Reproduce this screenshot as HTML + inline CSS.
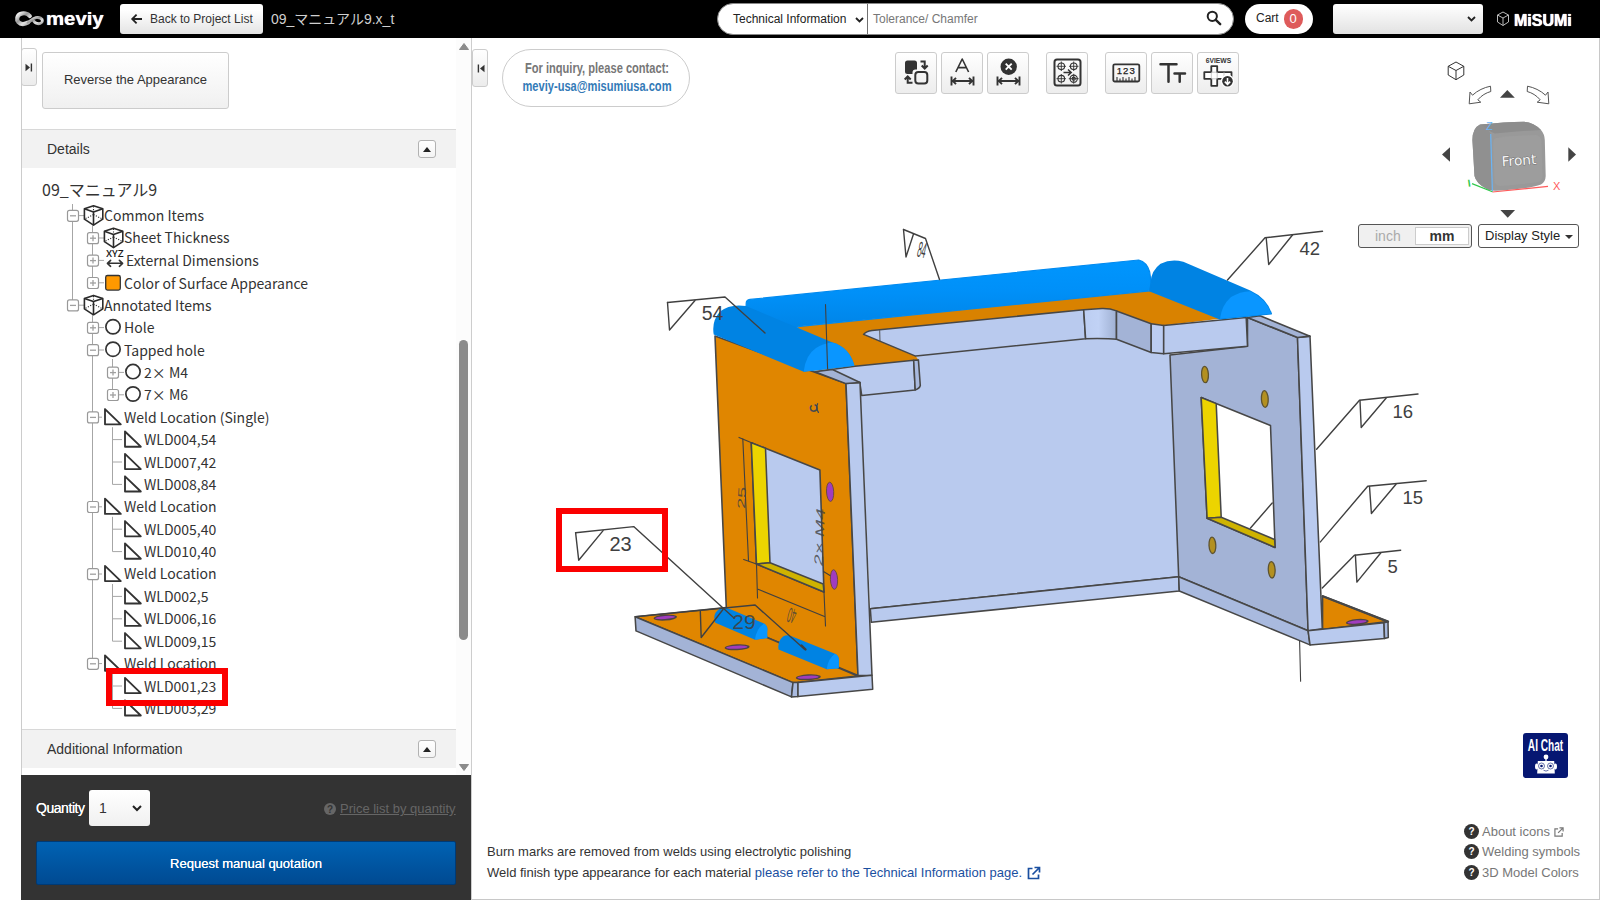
<!DOCTYPE html>
<html lang="en">
<head>
<meta charset="utf-8">
<title>meviy</title>
<style>
*{box-sizing:border-box;margin:0;padding:0}
html,body{width:1600px;height:900px;overflow:hidden;background:#fff}
body{font-family:"Liberation Sans","Noto Sans CJK JP",sans-serif;font-size:14px;color:#333;position:relative}
svg{position:absolute;overflow:visible}
/* ---------- top bar ---------- */
#topbar{position:absolute;left:0;top:0;width:1600px;height:38px;background:#000}
#logo{position:absolute;left:46px;top:6px;color:#fff;font-weight:bold;font-size:18px;line-height:26px;white-space:nowrap;transform-origin:0 0;transform:scaleX(1.130);text-shadow:0 0 0.700px #fff}
#back{position:absolute;left:120px;top:4px;width:143px;height:30px;border-radius:3px;background:linear-gradient(#fff 20%,#e4e4e4);color:#333;font-size:12px;line-height:30px;padding-left:30px;white-space:nowrap}
#fname{position:absolute;left:271px;top:9px;color:#d0d0d0;font-size:14px;line-height:20px;white-space:nowrap}
#search{position:absolute;left:717px;top:3px;width:517px;height:32px;border-radius:16px;background:#fff;border:1px solid #888}
#search .sel{position:absolute;left:15px;top:0;line-height:30px;font-size:12px;color:#222}
#search .dv{position:absolute;left:149px;top:0;width:1px;height:30px;background:#707070}
#search .ph{position:absolute;left:155px;top:0;line-height:30px;font-size:12px;color:#777}
#cart{position:absolute;left:1245px;top:4px;width:68px;height:30px;border-radius:15px;background:#fff;font-size:12px;line-height:28px;padding-left:11px;color:#222}
#cart b{position:absolute;left:38.5px;top:5px;width:19px;height:20px;border-radius:10px;background:#de5b5b;color:#fff;font-weight:normal;font-size:13px;line-height:20px;text-align:center}
#usel{position:absolute;left:1333px;top:4px;width:150px;height:30px;border-radius:3px;background:linear-gradient(#fff,#e2e2e2)}
#misumi{position:absolute;left:1514px;top:9.3px;color:#fff;font-weight:bold;font-size:16.5px;line-height:22px;white-space:nowrap;transform-origin:0 0;transform:scaleX(0.97);text-shadow:0 0 0.7px #fff,0 0 0.7px #fff}
/* ---------- left panel ---------- */
#lp{position:absolute;left:21px;top:38px;width:451px;height:862px;border-left:1px solid #ccc;border-right:1px solid #cdcdcd;background:#fff}
.tgl{position:absolute;width:16px;height:38px;border:1px solid #ccc;border-radius:3px;background:linear-gradient(#fff,#ececec)}
#rev{position:absolute;left:42px;top:52px;width:187px;height:57px;border:1px solid #ccc;border-radius:3px;background:linear-gradient(#fff,#f0f0f0);font-size:13px;line-height:54px;text-align:center;color:#333}
.hdr{position:absolute;left:22px;width:434px;height:39px;background:#f2f2f2;border-top:1px solid #d8d8d8;font-size:14px;line-height:38px;padding-left:25px;color:#333}
.hdr i{position:absolute;right:20px;top:10px;width:18px;height:18px;border:1px solid #b2b2b2;border-radius:3px;background:linear-gradient(#fff,#f4f4f4)}
.hdr i:after{content:"";position:absolute;left:4px;top:6px;border:4px solid transparent;border-top:0;border-bottom:5px solid #222}
#tree{position:absolute;left:0;top:0;width:457px;height:730px;font-family:"Noto Sans CJK JP","Liberation Sans",sans-serif;font-size:14px;color:#333}
#tree .t{position:absolute;white-space:nowrap;line-height:22px;height:22px}
#tree .root{font-size:16px;line-height:26px;height:26px}
#sb{position:absolute;left:456px;top:38px;width:15px;height:737px;background:#fcfcfc}
#sb .thumb{position:absolute;left:3px;top:302px;width:9px;height:300px;border-radius:5px;background:#8b8b8b}
#dark{position:absolute;left:21px;top:775px;width:450px;height:125px;background:#333}
#qty{position:absolute;left:36px;top:798.500px;color:#fff;font-size:14px;line-height:18px;letter-spacing:-0.45px;text-shadow:0 0 0.6px #fff}
#qsel{position:absolute;left:89px;top:790px;width:61px;height:36px;border-radius:3px;background:linear-gradient(#fff,#f0f0f0);font-size:14px;line-height:36px;padding-left:10px;color:#333}
#plist{position:absolute;left:340px;top:800px;color:#666;font-size:13px;line-height:18px;white-space:nowrap;text-decoration:underline}
#req{position:absolute;left:36px;top:841px;width:420px;height:44px;border-radius:2px;border:1px solid #003a75;background:linear-gradient(#0062b3,#004a92);color:#fff;font-size:13px;line-height:43px;text-align:center;text-shadow:0 0 0.5px #fff}
#redL{position:absolute;left:106px;top:668px;width:122px;height:38px;border:6px solid #fb0000}
/* ---------- viewer ---------- */
#viewer{position:absolute;left:472px;top:38px;width:1128px;height:862px;border-right:1px solid #c8c8c8;border-bottom:1px solid #c8c8c8;background:#fff}
#pill{position:absolute;left:502px;top:49px;width:188px;height:58px;border:1px solid #ccc;border-radius:29px;background:#fff;text-align:center;font-weight:bold;font-size:15px;white-space:nowrap}
#pill span{position:absolute;left:-56px;width:300px;text-align:center;transform:scaleX(0.74);line-height:18px}
.tb{position:absolute;top:52px;width:42px;height:42px;border:1px solid #ccc;border-radius:3px;background:linear-gradient(#fff,#ededed)}
#unit{position:absolute;left:1358px;top:224px;width:114px;height:24px;border:1px solid #555;border-radius:3px;background:#f0f0f0;font-size:14px;line-height:22px}
#unit .in{position:absolute;left:16px;top:0;color:#aaa}
#unit .mm{position:absolute;left:56px;top:2px;width:54px;height:18px;border:1px solid #ccc;background:#fff;text-align:center;font-weight:bold;color:#333;line-height:16px}
#dstyle{position:absolute;left:1478px;top:224px;width:101px;height:24px;border:1px solid #555;border-radius:3px;background:#fff;font-size:13px;line-height:22px;padding-left:6px;color:#222;white-space:nowrap}
#dstyle:after{content:"";position:absolute;right:5px;top:10px;border:4px solid transparent;border-bottom:0;border-top:4px solid #333}
#ai{position:absolute;left:1523px;top:733px;width:45px;height:45px;border-radius:3px;background:#061772}
#ai span{position:absolute;left:-18px;top:5px;width:81px;text-align:center;color:#fff;font-weight:bold;font-size:16px;line-height:16px;transform:scaleX(0.63);white-space:nowrap}
.hl{position:absolute;left:1464px;height:15px;font-size:13px;line-height:15px;color:#777;white-space:nowrap;padding-left:18px}
.hl:before{content:"?";position:absolute;left:0;top:0;width:15px;height:15px;border-radius:8px;background:#333;color:#fff;font-weight:bold;font-size:10px;line-height:15.500px;text-align:center}
.bt{position:absolute;left:487px;font-size:13px;line-height:18px;color:#333;white-space:nowrap}
.bt a{color:#1a4fa0;text-decoration:none}
#redV{position:absolute;left:556px;top:508px;width:112px;height:64px;border:6px solid #fb0000}

</style>
</head>
<body>
<div id="viewer"></div>
<div class="tgl" style="left:472px;top:49px"><svg width="9" height="9" viewBox="0 0 9 9" style="left:3px;top:14px"><path d="M8.5 0.8L4 4.5L8.5 8.2Z" fill="#333"/><path d="M2.4 0.5V8.5" stroke="#333" stroke-width="1.4"/></svg></div>
<div id="pill"><span style="top:9px;color:#777">For inquiry, please contact:</span><span style="top:27px;color:#337ab7">meviy-usa@misumiusa.com</span></div>

<!-- toolbar -->
<div class="tb" style="left:895px"><svg width="40" height="40" viewBox="0 0 40 40" style="left:-0.5px;top:-0.9px"><path d="M11.5 8.5H18.5A2.5 2.5 0 0 1 21 11V17.5H19.5A3 3 0 0 0 16.5 20.5V22H11.5A2.500 2.500 0 0 1 9 19.500V11A2.500 2.500 0 0 1 11.500 8.500Z" fill="#333"/><rect x="19.300" y="20" width="12" height="11.500" rx="3" fill="none" stroke="#333" stroke-width="2"/><path d="M24.500 9.500H28.700V16M25.700 13.500L28.700 16.500L31.700 13.500" fill="none" stroke="#333" stroke-width="2"/><path d="M16.500 30.700H11.700V25M8.700 27.500L11.700 24.500L14.700 27.500" fill="none" stroke="#333" stroke-width="2"/></svg></div>
<div class="tb" style="left:941px"><svg width="40" height="40" viewBox="0 0 40 40" style="left:-0.5px;top:-0.9px"><path d="M13.800 20L20.200 7L26.600 20M16.200 15.600H24.200" fill="none" stroke="#333" stroke-width="1.600" stroke-linejoin="round"/><path d="M9.500 24.500V33.500M31.500 24.500V33.500M10.500 29H30.500M14 25.800L10.800 29L14 32.200M27 25.800L30.200 29L27 32.200" fill="none" stroke="#333" stroke-width="1.900"/></svg></div>
<div class="tb" style="left:987px"><svg width="40" height="40" viewBox="0 0 40 40" style="left:-0.5px;top:-0.9px"><circle cx="20.700" cy="14.700" r="8.200" fill="#333"/><path d="M17.700 11.700L23.700 17.700M23.700 11.700L17.700 17.700" stroke="#fff" stroke-width="1.900"/><path d="M9.500 24.500V33.500M31.500 24.500V33.500M10.500 29H30.500M14 25.800L10.800 29L14 32.200M27 25.800L30.200 29L27 32.200" fill="none" stroke="#333" stroke-width="1.900"/></svg></div>
<div class="tb" style="left:1046px"><svg width="40" height="40" viewBox="0 0 40 40" style="left:-0.5px;top:-0.9px"><rect x="7.500" y="7.500" width="26" height="26" rx="2.500" fill="none" stroke="#333" stroke-width="2"/><g fill="none" stroke="#333" stroke-width="1.100"><circle cx="14.300" cy="14.300" r="3.300"/><circle cx="26.700" cy="14.300" r="3.300"/><circle cx="14.300" cy="26.700" r="3.300"/><circle cx="26.700" cy="26.700" r="3.600"/><circle cx="26.700" cy="26.700" r="1.600"/><path d="M14.300 9.500V19M9.500 14.300H19M26.700 9.500V19M22 14.300H31.500M14.300 22V31.500M9.500 26.700H19M26.700 21.800V31.700M21.800 26.700H31.700" stroke-width="0.900"/></g><path d="M16.500 20.500H24M21 17.500L24.200 20.500L21 23.500" fill="none" stroke="#333" stroke-width="1.500"/></svg></div>
<div class="tb" style="left:1105px"><svg width="40" height="40" viewBox="0 0 40 40" style="left:-0.5px;top:-0.9px"><rect x="7.300" y="12.300" width="26" height="17.200" rx="1.500" fill="none" stroke="#333" stroke-width="1.800"/><text x="20.300" y="22.300" text-anchor="middle" font-family="Liberation Sans,sans-serif" font-size="9.600" fill="#222" stroke="#222" stroke-width="0.250" letter-spacing="1">123</text><path d="M11 29V25M14 29V26.500M17 29V25M20 29V26.500M23 29V25M26 29V26.500M29 29V25" stroke="#333" stroke-width="1.100"/></svg></div>
<div class="tb" style="left:1151px"><svg width="40" height="40" viewBox="0 0 40 40" style="left:-0.5px;top:-0.9px"><path d="M8.500 12.300H24.500M16.500 12.300V29.800M22.500 21.500H33M27.700 21.500V29.800" fill="none" stroke="#333" stroke-width="2.500" stroke-linecap="round"/></svg></div>
<div class="tb" style="left:1197px"><svg width="40" height="40" viewBox="0 0 40 40" style="left:-0.5px;top:-0.9px"><text x="20.500" y="11.300" text-anchor="middle" font-family="Liberation Sans,sans-serif" font-weight="bold" font-size="7.200" fill="#333" textLength="25.500" lengthAdjust="spacingAndGlyphs">6VIEWS</text><path d="M13.300 14.200H19.200V20.200H33.500V26.800H19.200V33.800H13.300V26.800H6.300V20.200H13.300Z" fill="#fff" stroke="#333" stroke-width="1.800" stroke-linejoin="round"/><path d="M13.300 20.200H19.200V26.800H13.300ZM26 20.200V26.800" fill="none" stroke="#bbb" stroke-width="0.800"/><circle cx="29.500" cy="29.200" r="6.600" fill="#fff"/><circle cx="29.500" cy="29.200" r="5.300" fill="#333"/><path d="M29.500 26V32M26.800 29.600L29.500 32.300L32.200 29.600" fill="none" stroke="#fff" stroke-width="1.600"/></svg></div>

<!-- nav cube + arrows -->
<svg width="140" height="170" viewBox="1440 55 140 170" style="left:1440px;top:55px">
<g fill="none" stroke="#333" stroke-width="1"><path d="M1456 62L1463.800 66.300V75L1456 79.700L1448.200 75V66.300Z"/><path d="M1448.200 66.300L1456 70.500L1463.800 66.300M1456 70.500V79.700"/></g>
<path d="M1469.200 103.800L1470 92L1472.500 95.200C1477.500 90.500 1484 87.500 1490.500 86.200L1490.800 91.500C1486 92.800 1481.500 95.500 1477.800 99.800L1480.800 102.200Z" fill="#fff" stroke="#555" stroke-width="1"/>
<path d="M1548.800 103.800L1548 92L1545.500 95.200C1540.500 90.500 1534 87.500 1527.500 86.200L1527.200 91.500C1532 92.800 1536.500 95.500 1540.200 99.800L1537.200 102.200Z" fill="#fff" stroke="#555" stroke-width="1"/>
<path d="M1507.300 90L1500 97.800H1514.800Z" fill="#444"/>
<path d="M1507.700 217.700L1500.400 210H1515.100Z" fill="#444"/>
<path d="M1442 154.400L1450 147.300V161.700Z" fill="#444"/>
<path d="M1576 154.400L1568.300 147.300V161.700Z" fill="#444"/>
<defs><linearGradient id="cg1" x1="0" y1="0" x2="0" y2="1"><stop offset="0" stop-color="#8c8c8c"/><stop offset="1" stop-color="#a2a2a2"/></linearGradient></defs>
<path d="M1480 124.500Q1505 122 1524 121.700Q1534 122.500 1541 130Q1544.500 134 1544.800 140L1545.700 176Q1545.500 182 1541 184.500Q1530 189 1496 190.700Q1490 191 1486 188.500Q1476 183 1474.500 176L1472.400 140Q1472.500 128 1480 124.500Z" fill="#999"/>
<path d="M1480 124.500Q1505 122 1524 121.700Q1534 122.500 1541 130Q1520 131 1495 133.500Q1488 131 1480 124.500Z" fill="#8d8d8d"/>
<path d="M1480 124.500Q1488 128 1490.700 134L1492.400 190Q1488 190.500 1486 188.500Q1476 183 1474.500 176L1472.400 140Q1472.500 128 1480 124.500Z" fill="#909090"/>
<path d="M1496 138Q1515 135.500 1536 135Q1541 136 1541.500 141L1542.500 176Q1542 181 1538 182Q1520 185 1500 186Q1495 185.500 1494.500 181L1493 143Q1493.500 139 1496 138Z" fill="#9d9d9d"/>
<text x="1519" y="165.200" text-anchor="middle" font-family="DejaVu Sans,Liberation Sans,sans-serif" font-size="13.800" fill="#f6f6f6" stroke="#707070" stroke-width="0.900" paint-order="stroke" transform="rotate(-4 1519 161)">Front</text>
<path d="M1490.700 134L1492.400 191.600" stroke="#6ab4f5" stroke-width="1.200"/>
<path d="M1492.400 192L1548 186.400" stroke="#ff5a5a" stroke-width="1.200"/>
<path d="M1492.400 191.800L1472 183.600" stroke="#2fc84a" stroke-width="1.200"/>
<text x="1486" y="130" font-family="Liberation Sans,sans-serif" font-size="11" fill="#6ab4f5">Z</text>
<text x="1553" y="190" font-family="Liberation Sans,sans-serif" font-size="11" fill="#ff5a5a">X</text>
<text x="1467.500" y="186.500" font-family="Liberation Sans,sans-serif" font-size="10" font-weight="bold" fill="#2fc84a" transform="rotate(-8 1469 182)">I</text>
</svg>
<div id="unit"><span class="in">inch</span><span class="mm">mm</span></div>
<div id="dstyle">Display Style</div>

<div id="ai"><span>AI Chat</span><svg width="45" height="45" viewBox="0 0 45 45" style="left:0;top:0"><g fill="#fff"><circle cx="23" cy="24" r="2.400"/><rect x="22.400" y="25" width="1.200" height="3.500"/><path d="M14.800 28H31.200L31.800 40.500H14.200Z"/><ellipse cx="13.600" cy="33.500" rx="1.600" ry="3"/><ellipse cx="32.400" cy="33.500" rx="1.600" ry="3"/></g><g fill="none" stroke="#061772" stroke-width="0.600"><circle cx="18.500" cy="33" r="3"/><circle cx="27.500" cy="33" r="3"/><path d="M20.500 37.200Q23 39 25.500 37.200"/></g><circle cx="18.500" cy="33" r="1.300" fill="#061772"/><circle cx="27.500" cy="33" r="1.300" fill="#061772"/></svg></div>

<div class="hl" style="top:824px">About icons<svg width="10" height="10" viewBox="0 0 11 11" style="left:89.500px;top:3px"><path d="M4.500 2H1V10H9V6.500M6 1H10V5M10 1L4.500 6.500" fill="none" stroke="#777" stroke-width="1.300"/></svg></div>
<div class="hl" style="top:844px">Welding symbols</div>
<div class="hl" style="top:865px">3D Model Colors</div>
<div class="bt" style="top:843px">Burn marks are removed from welds using electrolytic polishing</div>
<div class="bt" style="top:864px">Weld finish type appearance for each material <a>please refer to the Technical Information page.</a><svg width="14" height="14" viewBox="0 0 14 14" style="margin-left:5px;top:2px;position:relative;display:inline-block;vertical-align:top"><path d="M5.500 2.500H1.500V12.500H11.500V8.500M7.500 1.500H12.500V6.500M12.500 1.500L5.500 8.500" fill="none" stroke="#1a4fa0" stroke-width="1.700"/></svg></div>

<svg width="1600" height="900" viewBox="0 0 1600 900" style="left:0;top:0">
<path d="M1322.5 596.0L1388.0 621.6L1322.5 629.5Z" fill="#e08600" stroke="#474747" stroke-width="1.7" stroke-linejoin="round"/>
<ellipse cx="1357.3" cy="622.0" rx="11.5" ry="3.0" fill="#4d4345" stroke="none" stroke-width="0" transform="rotate(-5 1357.3 622.0)"/>
<ellipse cx="1357.0" cy="621.9" rx="9.7" ry="1.55" fill="#a03cbe" stroke="none" stroke-width="0" transform="rotate(-5 1357.0 621.9)"/>
<path d="M860.0 330.0L1140.0 300.0L1172.0 355.0L1178.7 576.8L870.3 608.7L859.8 382.6Z" fill="#b9caee" stroke="none" stroke-width="1.55" stroke-linejoin="round"/>
<path d="M870.3 608.7L1178.7 576.8" fill="none" stroke="#474747" stroke-width="1.4" stroke-linecap="round" stroke-linejoin="round"/>
<path d="M870.3 608.7L1178.7 576.8L1179.3 591.0L871.3 622.3Z" fill="#b9caee" stroke="#474747" stroke-width="1.55" stroke-linejoin="round"/>
<path d="M1170.0 355.0L1247.5 346.2L1247.5 317.5L1297.5 337.5L1308.1 630.7L1178.7 576.8ZM1201.2 397.5L1270.5 425.5L1275.1 547.5L1207.1 518.2Z" fill="#a3b3d6" fill-rule="evenodd" stroke="#474747" stroke-width="1.55" stroke-linejoin="round"/>
<path d="M1201.2 397.5L1216.2 403.6L1221.2 517.3L1207.1 518.2Z" fill="#ecd400" stroke="#474747" stroke-width="1.55" stroke-linejoin="round"/>
<path d="M1207.1 518.2L1221.2 517.3L1274.6 539.5L1275.1 547.5Z" fill="#cfb300" stroke="#474747" stroke-width="1.55" stroke-linejoin="round"/>
<ellipse cx="1205" cy="374.5" rx="3.4" ry="8.2" fill="#b39020" stroke="#5e5330" stroke-width="1.3" transform="rotate(-3 1205 374.5)"/>
<ellipse cx="1264.8" cy="399" rx="3.4" ry="8.4" fill="#b39020" stroke="#5e5330" stroke-width="1.3" transform="rotate(-3 1264.8 399)"/>
<ellipse cx="1212.4" cy="545.3" rx="3.4" ry="8.2" fill="#b39020" stroke="#5e5330" stroke-width="1.3" transform="rotate(-3 1212.4 545.3)"/>
<ellipse cx="1271.7" cy="569.8" rx="3.4" ry="8.2" fill="#b39020" stroke="#5e5330" stroke-width="1.3" transform="rotate(-3 1271.7 569.8)"/>
<path d="M1178.7 576.8L1308.1 630.7L1310.0 644.9L1179.3 591.0Z" fill="#a9badf" stroke="#474747" stroke-width="1.55" stroke-linejoin="round"/>
<path d="M1297.5 337.5L1310.0 336.2L1322.3 628.8L1308.1 630.7Z" fill="#b9caee" stroke="#474747" stroke-width="1.55" stroke-linejoin="round"/>
<path d="M1308.1 630.7L1384.0 622.8L1384.5 638.4L1310.0 644.9Z" fill="#b9caee" stroke="#474747" stroke-width="1.55" stroke-linejoin="round"/>
<path d="M1384.0 622.8L1388.0 621.8L1388.3 637.4L1384.5 638.4Z" fill="#a9badf" stroke="#474747" stroke-width="1.55" stroke-linejoin="round"/>
<path d="M1322.8 596.3L1388.0 621.6" fill="none" stroke="#474747" stroke-width="2.3" stroke-linecap="round" stroke-linejoin="round"/>
<path d="M1247.5 317.5L1260.0 315.7L1310.0 336.2L1297.5 337.5Z" fill="#a3b3d6" stroke="#474747" stroke-width="1.7" stroke-linejoin="round"/>
<path d="M797 327.5L800 326.2L1150 290.7L1220 318.7L1163.7 325.5L1151.2 323.7L1117.5 311.2Q1110 308.4 1102 308.6L1083.7 309.8L872 330.4Q866 331 863.6 334.4L915.6 356.1L918.4 359.9L855 366.2L804 371.5Z" fill="#d98200" stroke="none" stroke-width="1.55" stroke-linejoin="round" stroke-linecap="round"/>
<defs><linearGradient id="rc1" x1="0" y1="0" x2="1" y2="0"><stop offset="0" stop-color="#bccdf1"/><stop offset="0.45" stop-color="#c1d2f5"/><stop offset="1" stop-color="#9fb0d2"/></linearGradient><linearGradient id="bd2" x1="0" y1="0" x2="0.1" y2="1"><stop offset="0" stop-color="#0097ff"/><stop offset="0.5" stop-color="#0090f8"/><stop offset="1" stop-color="#0084e6"/></linearGradient></defs>
<path d="M872 330.4L1083.7 309.8L1085.6 338.7L918.4 355.7L915.6 356.1L863.6 334.4Q866 331 872 330.4Z" fill="#b9caee" stroke="#474747" stroke-width="1.55" stroke-linejoin="round" stroke-linecap="round"/>
<path d="M879.7 330.6L880.0 341.2" fill="none" stroke="#474747" stroke-width="0.9" stroke-linecap="round" stroke-linejoin="round"/>
<path d="M1083.7 309.8L1102 308.6Q1110 308.4 1116.5 310.9L1116.5 339.3Q1108 338.3 1085.6 338.7Z" fill="url(#rc1)" stroke="#474747" stroke-width="1.55" stroke-linejoin="round" stroke-linecap="round"/>
<path d="M1116.5 310.9L1151.2 323.7L1151.2 352.5L1116.5 339.3Z" fill="#a3b3d6" stroke="#474747" stroke-width="1.55" stroke-linejoin="round"/>
<path d="M1151.2 323.7L1163.7 325.5L1163.7 353.7L1151.2 352.5Z" fill="#bccdf1" stroke="#474747" stroke-width="1.55" stroke-linejoin="round"/>
<path d="M1163.7 325.5L1246.2 317.5L1247.5 346.2L1163.7 353.7Z" fill="#b9caee" stroke="#474747" stroke-width="1.55" stroke-linejoin="round"/>
<path d="M815 371.7L855 366.2L913.7 360.3L915.2 389.9L861.7 395.4L859.8 382.6Z" fill="#b9caee" stroke="#474747" stroke-width="1.55" stroke-linejoin="round" stroke-linecap="round"/>
<path d="M913.7 360.3L918.4 359.9L920.3 385.5Q919.5 388.6 915.2 389.9Z" fill="#a9badf" stroke="#474747" stroke-width="1.55" stroke-linejoin="round" stroke-linecap="round"/>
<path d="M751.3 442.7L819.9 470.0L824.0 592.0L756.5 564.0Z" fill="#b9caee" stroke="none" stroke-width="1.55" stroke-linejoin="round"/>
<path d="M715.0 336.0L846.0 383.6L858.0 675.6L726.8 620.5L726.3 607.4ZM751.3 442.7L819.9 470.0L824.0 592.0L756.5 564.0Z" fill="#e08600" fill-rule="evenodd" stroke="#474747" stroke-width="1.6" stroke-linejoin="round"/>
<path d="M751.3 442.7L765.5 448.3L770.0 562.8L756.5 564.0Z" fill="#ecd400" stroke="#474747" stroke-width="1.55" stroke-linejoin="round"/>
<path d="M756.5 564.0L770.0 562.8L823.2 584.0L824.0 592.0Z" fill="#cfb300" stroke="#474747" stroke-width="1.55" stroke-linejoin="round"/>
<path d="M846.0 383.6L860.0 382.5L872.0 675.3L858.0 675.6Z" fill="#b9caee" stroke="#474747" stroke-width="1.55" stroke-linejoin="round"/>
<path d="M815.0 371.7L832.5 369.5L860.0 382.5L846.0 383.6Z" fill="#a3b3d6" stroke="#474747" stroke-width="1.55" stroke-linejoin="round"/>
<ellipse cx="830.1" cy="491.8" rx="3.6" ry="9.6" fill="#a03cbe" stroke="#6a4a3a" stroke-width="0.9" transform="rotate(-3 830.1 491.8)"/>
<ellipse cx="834" cy="579.5" rx="3.6" ry="9.8" fill="#a03cbe" stroke="#6a4a3a" stroke-width="0.9" transform="rotate(-3 834 579.5)"/>
<path d="M635.1 616.7L726.3 607.4L726.8 620.5L857.6 676.0L797.0 682.4L793.0 682.6Z" fill="#e08600" stroke="#474747" stroke-width="1.5" stroke-linejoin="round"/>
<path d="M635.1 616.7L793.0 682.6L791.5 696.9L636.0 630.9Z" fill="#a3b3d6" stroke="#474747" stroke-width="1.55" stroke-linejoin="round"/>
<path d="M793.0 682.6L798.0 682.4L798.0 696.6L791.5 696.9Z" fill="#a9badf" stroke="#474747" stroke-width="1.55" stroke-linejoin="round"/>
<path d="M798.0 682.4L872.0 675.3L872.7 689.3L798.0 696.6Z" fill="#b9caee" stroke="#474747" stroke-width="1.55" stroke-linejoin="round"/>
<ellipse cx="665.3" cy="617.6" rx="11.8" ry="3.0" fill="#4d4345" stroke="none" stroke-width="0" transform="rotate(-4 665.3 617.6)"/>
<ellipse cx="665.0" cy="617.5" rx="10.0" ry="1.55" fill="#a03cbe" stroke="none" stroke-width="0" transform="rotate(-4 665.0 617.5)"/>
<ellipse cx="737.1" cy="647.3" rx="12.5" ry="3.0" fill="#4d4345" stroke="none" stroke-width="0" transform="rotate(-3 737.1 647.3)"/>
<ellipse cx="736.8000000000001" cy="647.1999999999999" rx="10.7" ry="1.55" fill="#a03cbe" stroke="none" stroke-width="0" transform="rotate(-3 736.8000000000001 647.1999999999999)"/>
<ellipse cx="808.3" cy="677.3" rx="12.5" ry="3.0" fill="#4d4345" stroke="none" stroke-width="0" transform="rotate(-3 808.3 677.3)"/>
<ellipse cx="808.0" cy="677.1999999999999" rx="10.7" ry="1.55" fill="#a03cbe" stroke="none" stroke-width="0" transform="rotate(-3 808.0 677.1999999999999)"/>
<path d="M715.3 622.7Q712 613.5 719.5 609Q725 606.8 731 609.5L764 623.5Q768.5 626.5 767 631L767.3 638L755 639.8Z" fill="#0083e3" stroke="none" stroke-width="1.55" stroke-linejoin="round" stroke-linecap="round"/>
<path d="M755 639.8Q756 629 764 623.5Q768.5 626.5 767.2 633L767.3 638Z" fill="#0a96ff" stroke="none" stroke-width="1.55" stroke-linejoin="round" stroke-linecap="round"/>
<path d="M778.5 649.5Q777.5 641 783 636.5Q787 634.5 791 636L835 653.8Q839.5 656 838.8 661L838.7 668.3L826.7 669.2Z" fill="#0083e3" stroke="none" stroke-width="1.55" stroke-linejoin="round" stroke-linecap="round"/>
<path d="M826.7 669.2Q828 658.5 835 653.8Q839.5 656 838.8 661L838.7 668.3Z" fill="#0a96ff" stroke="none" stroke-width="1.55" stroke-linejoin="round" stroke-linecap="round"/>
<path d="M746.2 303.5Q746 300 750 299.4L1138.7 260Q1147 262 1149.7 272Q1151.5 282 1150 290.8L800 326.3L790 330L746 310Z" fill="url(#bd2)" stroke="#008af0" stroke-width="1.2" stroke-linejoin="round" stroke-linecap="round"/>
<path d="M713.7 334.5Q711.5 321 720 311.5Q730 303.5 746 306L832.5 342.5Q849 347 854.5 365.7L803.7 371.7Z" fill="#0083e3" stroke="none" stroke-width="1.55" stroke-linejoin="round" stroke-linecap="round"/>
<path d="M803.7 371.7Q805.5 355 816 348Q824 343 832.5 342.5Q849 347 854.5 365.7Z" fill="#0a96ff" stroke="none" stroke-width="1.55" stroke-linejoin="round" stroke-linecap="round"/>
<path d="M1151.2 283Q1152 271 1161 264.5Q1171 259.5 1183 262.5L1250 291.2Q1266 298.5 1271.2 313.7L1220 318.8L1150 290.8Z" fill="#0083e3" stroke="#0083e3" stroke-width="1.6" stroke-linejoin="round" stroke-linecap="round"/>
<path d="M1220 318.8Q1221.5 305.5 1231 297Q1240 291.5 1250 291.2Q1266 298.5 1271.2 313.7Z" fill="#0a96ff" stroke="none" stroke-width="1.55" stroke-linejoin="round" stroke-linecap="round"/>
<path d="M667.5 302.5L669.5 330.0L695.0 300.5" fill="none" stroke="#404040" stroke-width="1.4" stroke-linecap="round" stroke-linejoin="round"/>
<path d="M667.5 302.5L725.0 297.0L765.0 333.0" fill="none" stroke="#404040" stroke-width="1.4" stroke-linecap="round" stroke-linejoin="round"/>
<text x="701.7" y="320.3" font-family="Liberation Sans,sans-serif" font-size="19.5" fill="#404040">54</text>
<path d="M903.5 229.5L906.0 257.0L913.5 234.0" fill="none" stroke="#404040" stroke-width="1.4" stroke-linecap="round" stroke-linejoin="round"/>
<path d="M903.5 229.5L925.5 238.5L939.5 279.5" fill="none" stroke="#404040" stroke-width="1.4" stroke-linecap="round" stroke-linejoin="round"/>
<text font-family="Liberation Sans,sans-serif" font-size="22" fill="#404040" transform="translate(916.2 256.3) rotate(13) scale(0.35 1)">84</text>
<path d="M1266.2 238.0L1268.7 264.5L1292.5 235.0" fill="none" stroke="#404040" stroke-width="1.4" stroke-linecap="round" stroke-linejoin="round"/>
<path d="M1322.5 231.2L1265.0 237.8L1227.5 280.0" fill="none" stroke="#404040" stroke-width="1.4" stroke-linecap="round" stroke-linejoin="round"/>
<text x="1299.5" y="254.6" font-family="Liberation Sans,sans-serif" font-size="18.5" fill="#404040">42</text>
<path d="M1360.0 400.5L1361.2 427.5L1386.2 398.0" fill="none" stroke="#404040" stroke-width="1.4" stroke-linecap="round" stroke-linejoin="round"/>
<path d="M1418.0 394.0L1359.5 400.3L1316.6 449.3" fill="none" stroke="#404040" stroke-width="1.4" stroke-linecap="round" stroke-linejoin="round"/>
<text x="1392.5" y="418" font-family="Liberation Sans,sans-serif" font-size="18.5" fill="#404040">16</text>
<path d="M1272.2 503.0L1250.5 528.0" fill="none" stroke="#404040" stroke-width="1.4" stroke-linecap="round" stroke-linejoin="round"/>
<path d="M1369.5 486.5L1371.4 513.5L1396.0 484.2" fill="none" stroke="#404040" stroke-width="1.4" stroke-linecap="round" stroke-linejoin="round"/>
<path d="M1426.2 480.8L1367.7 486.3L1320.4 541.9" fill="none" stroke="#404040" stroke-width="1.4" stroke-linecap="round" stroke-linejoin="round"/>
<text x="1402.5" y="504.2" font-family="Liberation Sans,sans-serif" font-size="18.5" fill="#404040">15</text>
<path d="M1355.4 555.1L1356.9 582.1L1380.9 552.8" fill="none" stroke="#404040" stroke-width="1.4" stroke-linecap="round" stroke-linejoin="round"/>
<path d="M1400.7 550.2L1354.4 555.2L1322.3 588.1" fill="none" stroke="#404040" stroke-width="1.4" stroke-linecap="round" stroke-linejoin="round"/>
<text x="1387.5" y="572.8" font-family="Liberation Sans,sans-serif" font-size="18.5" fill="#404040">5</text>
<path d="M575.6 532.7L578.7 560.2L603.1 530.6" fill="none" stroke="#404040" stroke-width="1.4" stroke-linecap="round" stroke-linejoin="round"/>
<path d="M575.6 532.7L633.7 526.6L734.0 618.0" fill="none" stroke="#404040" stroke-width="1.4" stroke-linecap="round" stroke-linejoin="round"/>
<text x="609.5" y="550.7" font-family="Liberation Sans,sans-serif" font-size="20" fill="#404040">23</text>
<path d="M700.3 610.6L701.2 637.5L723.0 609.5" fill="none" stroke="#404040" stroke-width="1.4" stroke-linecap="round" stroke-linejoin="round"/>
<path d="M636.0 616.6L755.1 605.0L804.0 648.7" fill="none" stroke="#404040" stroke-width="1.4" stroke-linecap="round" stroke-linejoin="round"/>
<path d="M801.5 645.5L805.5 649.5" fill="none" stroke="#404040" stroke-width="2.4" stroke-linejoin="round" stroke-linecap="round"/>
<text x="732.3" y="628.9" font-family="Liberation Sans,sans-serif" font-size="21" fill="#404040" fill-opacity="0.9">29</text>
<path d="M825.5 304.6L827.6 369.0" fill="none" stroke="#404040" stroke-width="1.1" stroke-linecap="round" stroke-linejoin="round"/>
<path d="M1299.6 641.1L1300.6 681.3" fill="none" stroke="#404040" stroke-width="1.1" stroke-linecap="round" stroke-linejoin="round"/>
<path d="M742.8 438.9L748.5 560.8" fill="none" stroke="#404040" stroke-width="1.1" stroke-linecap="round" stroke-linejoin="round"/>
<path d="M739.0 437.4L752.2 443.0" fill="none" stroke="#404040" stroke-width="1.1" stroke-linecap="round" stroke-linejoin="round"/>
<path d="M743.7 559.4L756.5 564.0" fill="none" stroke="#404040" stroke-width="1.1" stroke-linecap="round" stroke-linejoin="round"/>
<path d="M756.5 564.0L757.5 598.0" fill="none" stroke="#404040" stroke-width="1.1" stroke-linecap="round" stroke-linejoin="round"/>
<path d="M758.0 589.2L824.5 616.5" fill="none" stroke="#404040" stroke-width="1.1" stroke-linecap="round" stroke-linejoin="round"/>
<path d="M824.0 592.0L825.5 626.0" fill="none" stroke="#404040" stroke-width="1.1" stroke-linecap="round" stroke-linejoin="round"/>
<path d="M823.5 571.5L830.0 575.5" fill="none" stroke="#404040" stroke-width="1.1" stroke-linecap="round" stroke-linejoin="round"/>
<text font-family="Liberation Sans,sans-serif" font-size="20" fill="#404040" fill-opacity="0.8" transform="translate(745 509) rotate(-87.5) scale(1 0.55)">25</text>
<text font-family="Liberation Sans,sans-serif" font-style="italic" font-size="20.5" fill="#404040" fill-opacity="0.8" transform="translate(822.8 566) rotate(-88) scale(1 0.6)">2× M4</text>
<text font-family="Liberation Sans,sans-serif" font-size="21" fill="#404040" fill-opacity="0.8" transform="translate(797.5 609.5) rotate(194) scale(0.36 1)">40</text>
<text font-family="Liberation Sans,sans-serif" font-size="11.5" fill="#3a4658" stroke="#3a4658" stroke-width="0.5" transform="translate(817.8 411.4) rotate(-100) scale(0.95 0.9)">C</text>
<path d="M817.6 403.8Q815.6 408 818.4 412.4" fill="none" stroke="#3a4658" stroke-width="1.3" stroke-linejoin="round" stroke-linecap="round"/>
</svg>

<div id="redV"></div>

<div id="lp"></div>
<div id="topbar">
  <svg width="60" height="38" viewBox="0 0 60 38" style="left:0;top:0"><defs><linearGradient id="lg1" x1="0" y1="0" x2="1" y2="1"><stop offset="0" stop-color="#ffffff"/><stop offset="0.4" stop-color="#9a9a9a"/><stop offset="0.7" stop-color="#e2e2e2"/><stop offset="1" stop-color="#a8a8a8"/></linearGradient></defs><g fill="none" stroke="url(#lg1)" stroke-linecap="round"><path d="M29.800 16C27.500 13.300 23.500 12.800 20.500 14C17 15.400 16.200 19.600 18.400 22.200C20.600 24.800 25 24.500 28 22.600" stroke-width="4.200"/><path d="M28 22.600C30.500 21 32.500 18.700 36 17.700C39.500 16.900 42.600 18.500 42.400 21C42.200 23.500 39 24.400 36.200 23.100C35.200 22.600 34.400 21.900 33.800 21.100" stroke-width="2.900"/></g></svg>
  <div id="logo">meviy</div>
  <div id="back">Back to Project List<svg width="12" height="12" viewBox="0 0 12 12" style="left:11px;top:9px"><path d="M11 6H1.6M5.6 1.6L1.2 6L5.6 10.4" fill="none" stroke="#222" stroke-width="1.8"/></svg></div>
  <div id="fname">09_マニュアル9.x_t</div>
  <div id="search"><span class="sel">Technical Information</span><svg width="9" height="6" viewBox="0 0 9 6" style="left:137px;top:12.500px"><path d="M1 1L4.5 4.5L8 1" fill="none" stroke="#222" stroke-width="1.8"/></svg><span class="dv"></span><span class="ph">Tolerance/ Chamfer</span><svg width="16" height="16" viewBox="0 0 16 16" style="left:488px;top:6px"><circle cx="6.3" cy="6.3" r="4.6" fill="none" stroke="#222" stroke-width="2"/><path d="M9.8 9.8L14.2 14.2" stroke="#222" stroke-width="2.4" stroke-linecap="round"/></svg></div>
  <div id="cart">Cart<b>0</b></div>
  <div id="usel"><svg width="9" height="6" viewBox="0 0 9 6" style="left:134px;top:12px"><path d="M1 1L4.5 4.5L8 1" fill="none" stroke="#222" stroke-width="1.8"/></svg></div>
  <svg width="14" height="18" viewBox="0 0 14 18" style="left:1496px;top:10px"><g fill="none" stroke="#bbb" stroke-width="1"><path d="M7 2L12.5 5V12L7 15.5L1.5 12V5Z"/><path d="M1.5 5L7 8L12.5 5M7 8V15.5"/></g></svg>
  <div id="misumi">MiSUMi</div>
</div>

<div class="tgl" style="left:21px;top:48px"><svg width="9" height="9" viewBox="0 0 9 9" style="left:3px;top:14px"><path d="M0.5 0.8L5 4.5L0.5 8.2Z" fill="#333"/><path d="M6.4 0.5V8.5" stroke="#333" stroke-width="1.4"/></svg></div>
<div id="rev">Reverse the Appearance</div>
<div class="hdr" style="top:129px">Details<i></i></div>
<div id="tree">
<svg width="457" height="730" viewBox="0 0 457 730" style="left:0;top:0">
<defs>
<symbol id="i-cube" overflow="visible"><g fill="none" stroke="#2b2b2b" stroke-width="1.6" stroke-linejoin="round"><path d="M9.5 0.8L18.8 3.8V14.2L9.5 20.2L0.4 14.2V3.8Z"/><path d="M0.4 3.8L9.5 7L18.8 3.8M9.5 7V20.2"/><path d="M9.5 1.5V9.6M9.5 9.6L1.5 13.6M9.5 9.6L17.6 13.6" stroke-width="1.1" stroke-dasharray="1.1 1.5"/></g></symbol>
</defs>
<g stroke="#a6a6a6" stroke-width="1" fill="none"><path d="M79.0 215.6L84.0 215.6"/><path d="M99.0 238.0L104.0 238.0"/><path d="M99.0 260.4L104.0 260.4"/><path d="M99.0 282.8L104.0 282.8"/><path d="M79.0 305.2L84.0 305.2"/><path d="M99.0 327.6L104.0 327.6"/><path d="M99.0 350.0L104.0 350.0"/><path d="M119.0 372.4L124.0 372.4"/><path d="M119.0 394.8L124.0 394.8"/><path d="M99.0 417.2L102.0 417.2"/><path d="M112.5 439.6L122.0 439.6"/><path d="M112.5 462.0L122.0 462.0"/><path d="M112.5 484.4L122.0 484.4"/><path d="M99.0 506.8L102.0 506.8"/><path d="M112.5 529.2L122.0 529.2"/><path d="M112.5 551.6L122.0 551.6"/><path d="M99.0 574.0L102.0 574.0"/><path d="M112.5 596.4L122.0 596.4"/><path d="M112.5 618.8L122.0 618.8"/><path d="M112.5 641.2L122.0 641.2"/><path d="M99.0 663.6L102.0 663.6"/><path d="M112.5 686.0L122.0 686.0"/><path d="M112.5 708.4L122.0 708.4"/><path d="M72.5 204.0L72.5 305.2"/><path d="M92.5 225.6L92.5 282.8"/><path d="M92.5 315.2L92.5 663.6"/><path d="M112.5 359.0L112.5 394.8"/><path d="M112.5 427.2L112.5 484.4"/><path d="M112.5 516.8L112.5 551.6"/><path d="M112.5 584.0L112.5 641.2"/><path d="M112.5 673.6L112.5 708.4"/></g>
<rect x="67.5" y="210.3" width="11" height="11" rx="2" fill="#fff" stroke="#999" stroke-width="1.2"/><path d="M70.0 215.8h6" stroke="#a0a0a0" stroke-width="1.3"/><rect x="87.5" y="232.7" width="11" height="11" rx="2" fill="#fff" stroke="#999" stroke-width="1.2"/><path d="M90.0 238.2h6" stroke="#a0a0a0" stroke-width="1.3"/><path d="M93.0 235.2v6" stroke="#a0a0a0" stroke-width="1.3"/><rect x="87.5" y="255.1" width="11" height="11" rx="2" fill="#fff" stroke="#999" stroke-width="1.2"/><path d="M90.0 260.6h6" stroke="#a0a0a0" stroke-width="1.3"/><path d="M93.0 257.6v6" stroke="#a0a0a0" stroke-width="1.3"/><rect x="87.5" y="277.5" width="11" height="11" rx="2" fill="#fff" stroke="#999" stroke-width="1.2"/><path d="M90.0 283.0h6" stroke="#a0a0a0" stroke-width="1.3"/><path d="M93.0 280.0v6" stroke="#a0a0a0" stroke-width="1.3"/><rect x="67.5" y="299.9" width="11" height="11" rx="2" fill="#fff" stroke="#999" stroke-width="1.2"/><path d="M70.0 305.4h6" stroke="#a0a0a0" stroke-width="1.3"/><rect x="87.5" y="322.3" width="11" height="11" rx="2" fill="#fff" stroke="#999" stroke-width="1.2"/><path d="M90.0 327.8h6" stroke="#a0a0a0" stroke-width="1.3"/><path d="M93.0 324.8v6" stroke="#a0a0a0" stroke-width="1.3"/><rect x="87.5" y="344.7" width="11" height="11" rx="2" fill="#fff" stroke="#999" stroke-width="1.2"/><path d="M90.0 350.2h6" stroke="#a0a0a0" stroke-width="1.3"/><rect x="107.5" y="367.1" width="11" height="11" rx="2" fill="#fff" stroke="#999" stroke-width="1.2"/><path d="M110.0 372.6h6" stroke="#a0a0a0" stroke-width="1.3"/><path d="M113.0 369.6v6" stroke="#a0a0a0" stroke-width="1.3"/><rect x="107.5" y="389.5" width="11" height="11" rx="2" fill="#fff" stroke="#999" stroke-width="1.2"/><path d="M110.0 395.0h6" stroke="#a0a0a0" stroke-width="1.3"/><path d="M113.0 392.0v6" stroke="#a0a0a0" stroke-width="1.3"/><rect x="87.5" y="411.9" width="11" height="11" rx="2" fill="#fff" stroke="#999" stroke-width="1.2"/><path d="M90.0 417.4h6" stroke="#a0a0a0" stroke-width="1.3"/><rect x="87.5" y="501.5" width="11" height="11" rx="2" fill="#fff" stroke="#999" stroke-width="1.2"/><path d="M90.0 507.0h6" stroke="#a0a0a0" stroke-width="1.3"/><rect x="87.5" y="568.7" width="11" height="11" rx="2" fill="#fff" stroke="#999" stroke-width="1.2"/><path d="M90.0 574.2h6" stroke="#a0a0a0" stroke-width="1.3"/><rect x="87.5" y="658.3" width="11" height="11" rx="2" fill="#fff" stroke="#999" stroke-width="1.2"/><path d="M90.0 663.8h6" stroke="#a0a0a0" stroke-width="1.3"/>
<use href="#i-cube" x="84" y="205.0"/><use href="#i-cube" x="104" y="227.4"/><g transform="translate(106 249.8)"><text x="8.8" y="7.2" text-anchor="middle" font-family="Noto Sans CJK JP,Liberation Sans,sans-serif" font-weight="500" font-size="9" fill="#1a1a1a" textLength="17.8" lengthAdjust="spacingAndGlyphs">XYZ</text><path d="M1.6 13.5H16.4M4.6 10.5L1.4 13.5L4.6 16.5M13.4 10.5L16.6 13.5L13.4 16.5" fill="none" stroke="#333" stroke-width="1.6" stroke-linecap="round" stroke-linejoin="round"/></g><rect x="105.7" y="275.5" width="14.6" height="14.6" rx="1.8" fill="#ff9900" stroke="#333" stroke-width="1.3"/><use href="#i-cube" x="84" y="294.6"/><circle cx="113" cy="326.8" r="7.15" fill="none" stroke="#333" stroke-width="1.7"/><circle cx="113" cy="349.2" r="7.15" fill="none" stroke="#333" stroke-width="1.7"/><circle cx="133" cy="371.6" r="7.15" fill="none" stroke="#333" stroke-width="1.7"/><circle cx="133" cy="394.0" r="7.15" fill="none" stroke="#333" stroke-width="1.7"/><path d="M105.0 409.1V424.3H120.8Z" fill="none" stroke="#333" stroke-width="1.85" stroke-linejoin="round"/><path d="M125.0 431.5V446.7H140.8Z" fill="none" stroke="#333" stroke-width="1.85" stroke-linejoin="round"/><path d="M125.0 453.9V469.1H140.8Z" fill="none" stroke="#333" stroke-width="1.85" stroke-linejoin="round"/><path d="M125.0 476.3V491.5H140.8Z" fill="none" stroke="#333" stroke-width="1.85" stroke-linejoin="round"/><path d="M105.0 498.7V513.9H120.8Z" fill="none" stroke="#333" stroke-width="1.85" stroke-linejoin="round"/><path d="M125.0 521.1V536.3H140.8Z" fill="none" stroke="#333" stroke-width="1.85" stroke-linejoin="round"/><path d="M125.0 543.5V558.7H140.8Z" fill="none" stroke="#333" stroke-width="1.85" stroke-linejoin="round"/><path d="M105.0 565.9V581.1H120.8Z" fill="none" stroke="#333" stroke-width="1.85" stroke-linejoin="round"/><path d="M125.0 588.3V603.5H140.8Z" fill="none" stroke="#333" stroke-width="1.85" stroke-linejoin="round"/><path d="M125.0 610.7V625.9H140.8Z" fill="none" stroke="#333" stroke-width="1.85" stroke-linejoin="round"/><path d="M125.0 633.1V648.3H140.8Z" fill="none" stroke="#333" stroke-width="1.85" stroke-linejoin="round"/><path d="M105.0 655.5V670.7H120.8Z" fill="none" stroke="#333" stroke-width="1.85" stroke-linejoin="round"/><path d="M125.0 677.9V693.1H140.8Z" fill="none" stroke="#333" stroke-width="1.85" stroke-linejoin="round"/><path d="M125.0 700.3V715.5H140.8Z" fill="none" stroke="#333" stroke-width="1.85" stroke-linejoin="round"/>
</svg>
<div class="t root" style="left:42px;top:175.6px">09_マニュアル9</div>
<div class="t" style="left:104px;top:204px">Common Items</div><div class="t" style="left:124px;top:226px">Sheet Thickness</div><div class="t" style="left:126px;top:249px">External Dimensions</div><div class="t" style="left:124px;top:272px">Color of Surface Appearance</div><div class="t" style="left:104px;top:294px">Annotated Items</div><div class="t" style="left:124px;top:316px">Hole</div><div class="t" style="left:124px;top:339px">Tapped hole</div><div class="t" style="left:144px;top:361px">2× M4</div><div class="t" style="left:144px;top:383px">7× M6</div><div class="t" style="left:124px;top:406px">Weld Location (Single)</div><div class="t" style="left:144px;top:428px">WLD004,54</div><div class="t" style="left:144px;top:451px">WLD007,42</div><div class="t" style="left:144px;top:473px">WLD008,84</div><div class="t" style="left:124px;top:495px">Weld Location</div><div class="t" style="left:144px;top:518px">WLD005,40</div><div class="t" style="left:144px;top:540px">WLD010,40</div><div class="t" style="left:124px;top:562px">Weld Location</div><div class="t" style="left:144px;top:585px">WLD002,5</div><div class="t" style="left:144px;top:607px">WLD006,16</div><div class="t" style="left:144px;top:630px">WLD009,15</div><div class="t" style="left:124px;top:652px">Weld Location</div><div class="t" style="left:144px;top:675px">WLD001,23</div><div class="t" style="left:144px;top:697px">WLD003,29</div>
</div>
<div id="redL"></div>
<div class="hdr" style="top:729px">Additional Information<i></i></div>
<div id="sb"><svg width="15" height="737" viewBox="0 0 15 737" style="left:0;top:0"><path d="M3.500 11.500L8 5.500L12.500 11.500Z M3.500 726.500L8 732.500L12.500 726.500Z" fill="#8b8b8b" stroke="#8b8b8b" stroke-width="1" stroke-linejoin="round"/></svg><div class="thumb"></div></div>
<div id="dark"></div>
<div id="qty">Quantity</div>
<div id="qsel">1<svg width="10" height="7" viewBox="0 0 10 7" style="left:43px;top:15px"><path d="M1 1L5 5L9 1" fill="none" stroke="#222" stroke-width="2"/></svg></div>
<svg width="12" height="12" viewBox="0 0 12 12" style="left:324px;top:803px"><circle cx="6" cy="6" r="6" fill="#666"/><text x="6" y="9.6" text-anchor="middle" font-family="Liberation Sans,sans-serif" font-weight="bold" font-size="10" fill="#333">?</text></svg>
<div id="plist">Price list by quantity</div>
<div id="req">Request manual quotation</div>

</body>
</html>
